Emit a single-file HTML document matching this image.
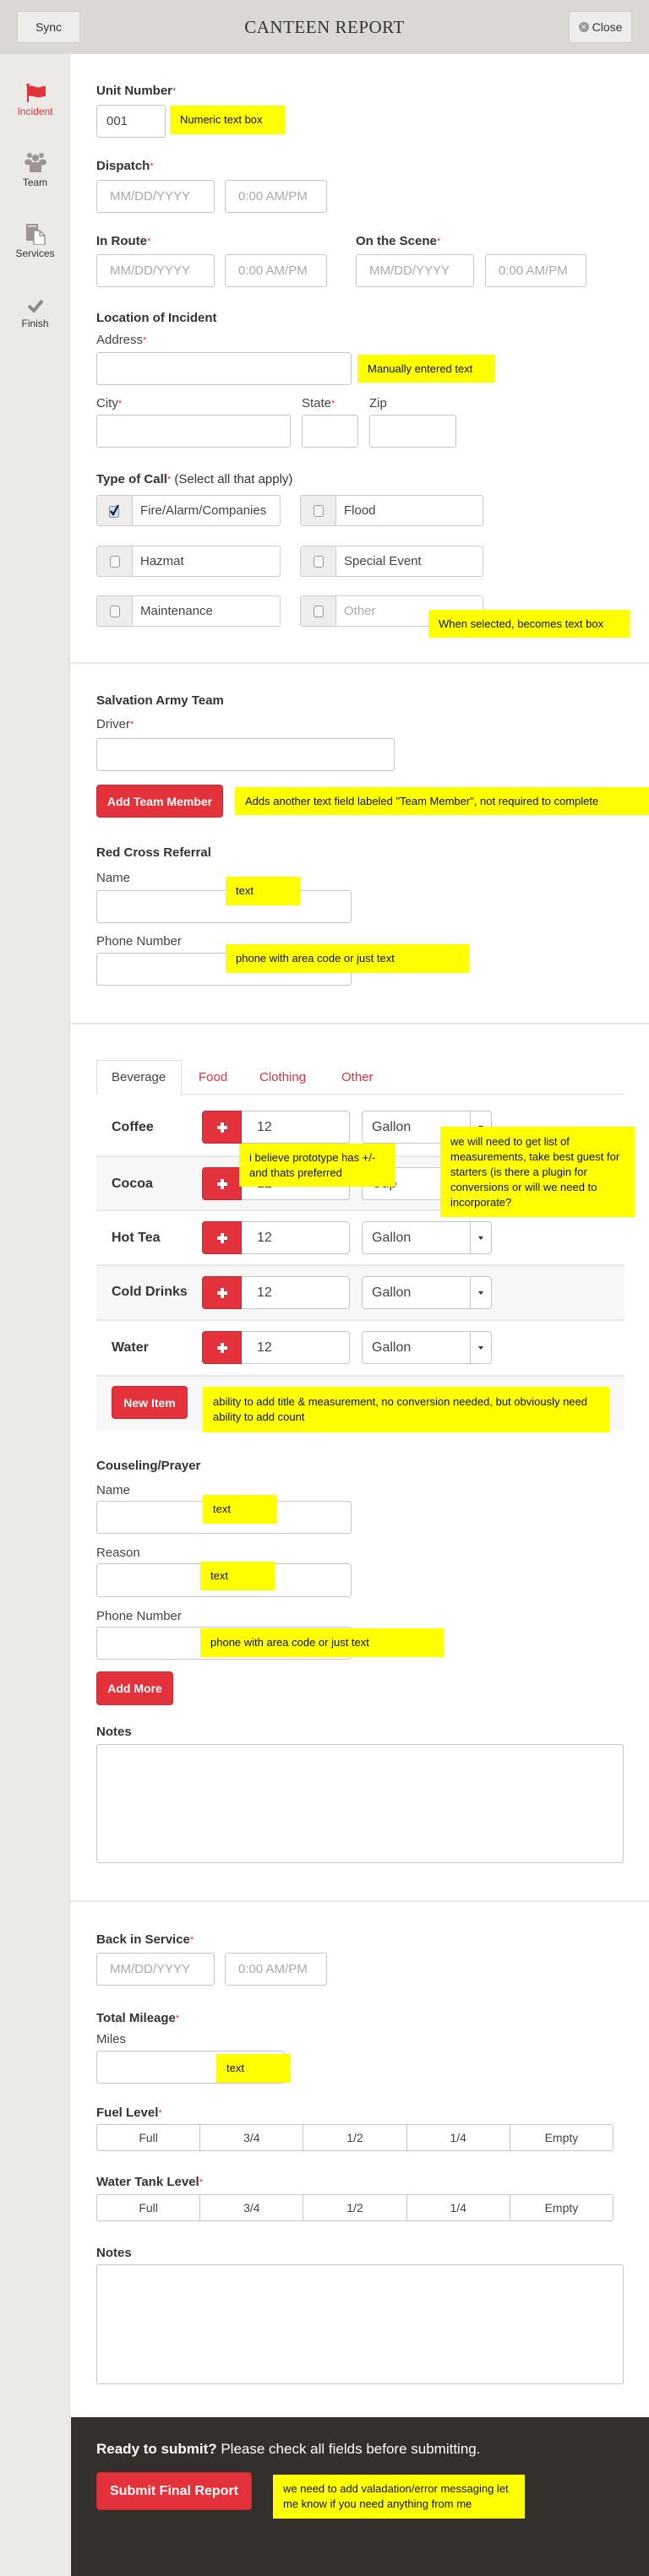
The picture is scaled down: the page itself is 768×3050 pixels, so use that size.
<!DOCTYPE html>
<html><head><meta charset="utf-8">
<style>
*{box-sizing:border-box;margin:0;padding:0}
body{width:768px;height:3050px;position:relative;background:#fff;font-family:"Liberation Sans",Arial,sans-serif;color:#333;overflow:hidden}
.a{position:absolute}
.hdr{left:0;top:0;width:768px;height:64px;background:#dbd8d3}
.btn{background:#eeedeb;border:1px solid #cfccc6;border-radius:3px;font-size:14px;color:#333;display:flex;align-items:center;justify-content:center}
.side{left:0;top:64px;width:83px;height:2986px;background:#ebeae7;border-right:1px solid #dad8d3}
.nav{width:83px;text-align:center;font-size:12px;color:#333;left:0}
.lbl{font-size:15px;font-weight:bold;color:#333;line-height:18px}
.sub{font-size:15px;color:#444;line-height:18px}
.st{color:#e3323b;font-size:11px;vertical-align:top;font-weight:normal}
.inp{border:1px solid #c8c5c0;border-radius:3px;background:#fff;font-size:15px;color:#aaa;display:flex;align-items:center;padding-left:15px}
.note{background:#ffff00;color:#111;font-size:13px;line-height:18px;padding:0 12px;display:flex;align-items:center}
.cb{border:1px solid #cfccc6;border-radius:3px;background:#fff;display:flex;align-items:center;font-size:15px;color:#444}
.cb .ad{width:42px;height:100%;background:#eeedeb;border-right:1px solid #cfccc6;display:flex;align-items:center;justify-content:center}
.cb .bx{width:12px;height:14px;border:1px solid #999;border-radius:3px;background:#f6f6f6}
.cb span{padding-left:9px}
.red{background:#e3323b;border:1px solid #c52a32;border-radius:4px;color:#fff;font-weight:bold;font-size:14px;display:flex;align-items:center;justify-content:center}
.div{left:83px;width:685px;height:2px;background:#e8e7e4}
.row{left:114px;width:625px}
.gray{background:#f7f7f7}
.rl{font-size:16px;font-weight:bold;color:#333}
.plus{width:47px;height:39px;background:#e3323b;border:1px solid #c52a32;border-radius:4px 0 0 4px;display:flex;align-items:center;justify-content:center}
.num{width:128px;height:39px;border:1px solid #c8c5c0;border-left:none;border-radius:0 4px 4px 0;font-size:16px;color:#444;padding-left:18px;display:flex;align-items:center;background:#fff}
.sel{width:154px;height:39px;border:1px solid #c8c5c0;border-radius:4px;font-size:16px;color:#444;padding-left:11px;display:flex;align-items:center;background:#fff}
.sel i{position:absolute;right:0;top:0;width:25px;height:37px;border-left:1px solid #c8c5c0}
.sel i:after{content:"";position:absolute;left:9px;top:17px;border:3px solid transparent;border-top:4px solid #333}
.grp{left:114px;width:612px;height:32px;border:1px solid #c8c5c0;border-radius:3px;display:flex;background:#fff}
.grp div{flex:1;border-right:1px solid #c8c5c0;display:flex;align-items:center;justify-content:center;font-size:14px;color:#444}
.grp div:last-child{border-right:none}
.ta{left:114px;width:624px;border:1px solid #c8c5c0;border-radius:3px;background:#fff}
</style></head><body>
<div class="a hdr"></div>
<div class="a btn" style="left:20px;top:13px;width:75px;height:38px">Sync</div>
<div class="a" style="left:0;width:768px;top:20px;text-align:center;font-family:'Liberation Serif',serif;font-size:21px;color:#333;letter-spacing:0.5px">CANTEEN REPORT</div>
<div class="a btn" style="left:673px;top:13px;width:75px;height:38px"><span style="display:inline-block;width:12px;height:12px;border-radius:50%;background:#999;color:#eee;font-size:9px;line-height:12px;text-align:center;margin-right:4px">✕</span>Close</div>

<div class="a side"></div>
<svg class="a" style="left:31px;top:99px" width="24" height="22" viewBox="0 0 24 22"><rect x="1" y="0" width="2" height="22" fill="#e3323b"/><circle cx="2" cy="1.5" r="1.8" fill="#e3323b"/><path d="M3 3 C8 1 12 6 17 4 C19 3.3 21 3 23 3 L23 15 C19 15 16 17 12 16 C8 15 6 14 3 15 Z" fill="#e3323b"/></svg>
<div class="a nav" style="top:125px;color:#e3323b">Incident</div>
<svg class="a" style="left:29px;top:180px" width="26" height="24" viewBox="0 0 26 24"><circle cx="6" cy="4" r="3" fill="#9b9690"/><circle cx="20" cy="4" r="3" fill="#9b9690"/><circle cx="13" cy="7" r="4" fill="#9b9690"/><ellipse cx="4.5" cy="12" rx="4.5" ry="3.5" fill="#9b9690"/><ellipse cx="21.5" cy="12" rx="4.5" ry="3.5" fill="#9b9690"/><path d="M6 24 L6 17 C6 13 9 12 13 12 C17 12 20 13 20 17 L20 24 Z" fill="#9b9690"/></svg>
<div class="a nav" style="top:209px">Team</div>
<svg class="a" style="left:30px;top:265px" width="24" height="25" viewBox="0 0 24 25"><rect x="1" y="0" width="14" height="20" fill="#9b9690"/><rect x="3" y="2" width="10" height="1.5" fill="#ebeae7"/><path d="M10 8 L17 8 L23 14 L23 25 L10 25 Z" fill="#fff" stroke="#9b9690" stroke-width="1.5"/><path d="M17 8 L17 14 L23 14" fill="none" stroke="#9b9690" stroke-width="1.5"/></svg>
<div class="a nav" style="top:293px">Services</div>
<svg class="a" style="left:33px;top:354px" width="18" height="16" viewBox="0 0 18 16"><path d="M1 8 L7 14 L17 2" fill="none" stroke="#8f8a84" stroke-width="4"/></svg>
<div class="a nav" style="top:376px">Finish</div>

<!-- Incident -->
<div class="a lbl" style="left:114px;top:99px">Unit Number<span class="st">*</span></div>
<div class="a inp" style="left:114px;top:124px;width:82px;height:39px;color:#444;padding-left:11px">001</div>
<div class="a note" style="left:201px;top:125px;width:136px;height:34px">Numeric text box</div>

<div class="a lbl" style="left:114px;top:188px">Dispatch<span class="st">*</span></div>
<div class="a inp" style="left:114px;top:213px;width:140px;height:39px">MM/DD/YYYY</div>
<div class="a inp" style="left:266px;top:213px;width:121px;height:39px">0:00 AM/PM</div>

<div class="a lbl" style="left:114px;top:277px">In Route<span class="st">*</span></div>
<div class="a inp" style="left:114px;top:301px;width:140px;height:39px">MM/DD/YYYY</div>
<div class="a inp" style="left:266px;top:301px;width:121px;height:39px">0:00 AM/PM</div>
<div class="a lbl" style="left:421px;top:277px">On the Scene<span class="st">*</span></div>
<div class="a inp" style="left:421px;top:301px;width:140px;height:39px">MM/DD/YYYY</div>
<div class="a inp" style="left:574px;top:301px;width:120px;height:39px">0:00 AM/PM</div>

<div class="a lbl" style="left:114px;top:368px">Location of Incident</div>
<div class="a sub" style="left:114px;top:394px">Address<span class="st">*</span></div>
<div class="a inp" style="left:114px;top:417px;width:302px;height:39px"></div>
<div class="a note" style="left:423px;top:420px;width:163px;height:33px">Manually entered text</div>
<div class="a sub" style="left:114px;top:469px">City<span class="st">*</span></div>
<div class="a sub" style="left:357px;top:469px">State<span class="st">*</span></div>
<div class="a sub" style="left:437px;top:469px">Zip</div>
<div class="a inp" style="left:114px;top:491px;width:230px;height:39px"></div>
<div class="a inp" style="left:357px;top:491px;width:67px;height:39px"></div>
<div class="a inp" style="left:437px;top:491px;width:103px;height:39px"></div>

<div class="a lbl" style="left:114px;top:559px">Type of Call<span class="st">*</span> <span style="font-weight:normal">(Select all that apply)</span></div>
<div class="a cb" style="left:114px;top:586px;width:218px;height:37px"><div class="ad"><svg width="14" height="16" viewBox="0 0 14 16"><rect x="0.5" y="2.5" width="11" height="13" rx="2" fill="#cfe0f5" stroke="#6a8cc0"/><path d="M2 8 L5 12 L11 1" fill="none" stroke="#111" stroke-width="2.2"/></svg></div><span>Fire/Alarm/Companies</span></div>
<div class="a cb" style="left:355px;top:586px;width:217px;height:37px"><div class="ad"><div class="bx"></div></div><span>Flood</span></div>
<div class="a cb" style="left:114px;top:646px;width:218px;height:37px"><div class="ad"><div class="bx"></div></div><span>Hazmat</span></div>
<div class="a cb" style="left:355px;top:646px;width:217px;height:37px"><div class="ad"><div class="bx"></div></div><span>Special Event</span></div>
<div class="a cb" style="left:114px;top:705px;width:218px;height:37px"><div class="ad"><div class="bx"></div></div><span>Maintenance</span></div>
<div class="a cb" style="left:355px;top:705px;width:217px;height:37px"><div class="ad"><div class="bx"></div></div><span style="color:#aaa">Other</span></div>
<div class="a note" style="left:507px;top:722px;width:238px;height:33px">When selected, becomes text box</div>

<div class="a div" style="top:784px"></div>

<!-- Team -->
<div class="a lbl" style="left:114px;top:821px">Salvation Army Team</div>
<div class="a sub" style="left:114px;top:849px">Driver<span class="st">*</span></div>
<div class="a inp" style="left:114px;top:874px;width:353px;height:39px"></div>
<div class="a red" style="left:114px;top:929px;width:150px;height:39px">Add Team Member</div>
<div class="a note" style="left:278px;top:932px;width:490px;height:33px">Adds another text field labeled "Team Member", not required to complete</div>

<div class="a lbl" style="left:114px;top:1001px">Red Cross Referral</div>
<div class="a sub" style="left:114px;top:1031px">Name</div>
<div class="a inp" style="left:114px;top:1054px;width:302px;height:39px"></div>
<div class="a note" style="left:267px;top:1038px;width:88px;height:34px">text</div>
<div class="a sub" style="left:114px;top:1106px">Phone Number</div>
<div class="a inp" style="left:114px;top:1128px;width:302px;height:39px"></div>
<div class="a note" style="left:267px;top:1118px;width:288px;height:34px">phone with area code or just text</div>

<div class="a div" style="top:1211px"></div>

<!-- Services -->
<div class="a" style="left:114px;top:1295px;width:625px;height:1px;background:#ddd"></div>
<div class="a" style="left:114px;top:1255px;width:101px;height:42px;border:1px solid #ddd;border-bottom:1px solid #fff;background:#fff"></div>
<div class="a sub" style="left:132px;top:1267px">Beverage</div>
<div class="a sub" style="left:235px;top:1267px;color:#e3323b">Food</div>
<div class="a sub" style="left:307px;top:1267px;color:#e3323b">Clothing</div>
<div class="a sub" style="left:404px;top:1267px;color:#e3323b">Other</div>

<div class="a row gray" style="top:1368px;height:66px;border-top:2px solid #e8e8e8;border-bottom:2px solid #e8e8e8"></div>
<div class="a row gray" style="top:1497px;height:67px;border-top:2px solid #e8e8e8;border-bottom:2px solid #e8e8e8"></div>
<div class="a row gray" style="top:1628px;height:65px;border-top:2px solid #e8e8e8"></div>

<div class="a rl" style="left:132px;top:1326px">Coffee</div>
<div class="a rl" style="left:132px;top:1393px">Cocoa</div>
<div class="a rl" style="left:132px;top:1457px">Hot Tea</div>
<div class="a rl" style="left:132px;top:1521px">Cold Drinks</div>
<div class="a rl" style="left:132px;top:1587px">Water</div>

<div class="a plus" style="left:239px;top:1315px"><svg width="14" height="14"><path d="M7 1V13M1 7H13" stroke="#fff" stroke-width="4"/></svg></div>
<div class="a num" style="left:286px;top:1315px">12</div>
<div class="a sel" style="left:428px;top:1315px">Gallon<i></i></div>
<div class="a plus" style="left:239px;top:1382px"><svg width="14" height="14"><path d="M7 1V13M1 7H13" stroke="#fff" stroke-width="4"/></svg></div>
<div class="a num" style="left:286px;top:1382px">12</div>
<div class="a sel" style="left:428px;top:1382px">Cup<i></i></div>
<div class="a plus" style="left:239px;top:1446px"><svg width="14" height="14"><path d="M7 1V13M1 7H13" stroke="#fff" stroke-width="4"/></svg></div>
<div class="a num" style="left:286px;top:1446px">12</div>
<div class="a sel" style="left:428px;top:1446px">Gallon<i></i></div>
<div class="a plus" style="left:239px;top:1511px"><svg width="14" height="14"><path d="M7 1V13M1 7H13" stroke="#fff" stroke-width="4"/></svg></div>
<div class="a num" style="left:286px;top:1511px">12</div>
<div class="a sel" style="left:428px;top:1511px">Gallon<i></i></div>
<div class="a plus" style="left:239px;top:1576px"><svg width="14" height="14"><path d="M7 1V13M1 7H13" stroke="#fff" stroke-width="4"/></svg></div>
<div class="a num" style="left:286px;top:1576px">12</div>
<div class="a sel" style="left:428px;top:1576px">Gallon<i></i></div>

<div class="a note" style="left:283px;top:1354px;width:185px;height:51px">i believe prototype has +/- and thats preferred</div>
<div class="a note" style="left:521px;top:1334px;width:230px;height:107px">we will need to get list of measurements, take best guest for starters (is there a plugin for conversions or will we need to incorporate?</div>
<div class="a red" style="left:132px;top:1641px;width:90px;height:39px">New Item</div>
<div class="a note" style="left:240px;top:1642px;width:481px;height:54px">ability to add title &amp; measurement, no conversion needed, but obviously need ability to add count</div>

<div class="a lbl" style="left:114px;top:1727px">Couseling/Prayer</div>
<div class="a sub" style="left:114px;top:1756px">Name</div>
<div class="a inp" style="left:114px;top:1777px;width:302px;height:39px"></div>
<div class="a note" style="left:240px;top:1770px;width:88px;height:34px">text</div>
<div class="a sub" style="left:114px;top:1830px">Reason</div>
<div class="a inp" style="left:114px;top:1851px;width:302px;height:40px"></div>
<div class="a note" style="left:237px;top:1849px;width:88px;height:34px">text</div>
<div class="a sub" style="left:114px;top:1905px">Phone Number</div>
<div class="a inp" style="left:114px;top:1926px;width:302px;height:39px"></div>
<div class="a note" style="left:237px;top:1928px;width:288px;height:34px">phone with area code or just text</div>
<div class="a red" style="left:114px;top:1979px;width:91px;height:40px">Add More</div>
<div class="a lbl" style="left:114px;top:2042px">Notes</div>
<div class="a ta" style="top:2065px;height:141px"></div>

<div class="a div" style="top:2250px"></div>

<!-- Finish -->
<div class="a lbl" style="left:114px;top:2288px">Back in Service<span class="st">*</span></div>
<div class="a inp" style="left:114px;top:2312px;width:140px;height:39px">MM/DD/YYYY</div>
<div class="a inp" style="left:266px;top:2312px;width:121px;height:39px">0:00 AM/PM</div>
<div class="a lbl" style="left:114px;top:2381px">Total Mileage<span class="st">*</span></div>
<div class="a sub" style="left:114px;top:2406px">Miles</div>
<div class="a inp" style="left:114px;top:2428px;width:223px;height:39px"></div>
<div class="a note" style="left:256px;top:2432px;width:88px;height:34px">text</div>
<div class="a lbl" style="left:114px;top:2493px">Fuel Level<span class="st">*</span></div>
<div class="a grp" style="top:2515px"><div>Full</div><div>3/4</div><div>1/2</div><div>1/4</div><div>Empty</div></div>
<div class="a lbl" style="left:114px;top:2575px">Water Tank Level<span class="st">*</span></div>
<div class="a grp" style="top:2598px"><div>Full</div><div>3/4</div><div>1/2</div><div>1/4</div><div>Empty</div></div>
<div class="a lbl" style="left:114px;top:2659px">Notes</div>
<div class="a ta" style="top:2681px;height:142px"></div>

<div class="a" style="left:84px;top:2862px;width:684px;height:188px;background:#332f2a"></div>
<div class="a" style="left:114px;top:2890px;font-size:17px;color:#fff"><b>Ready to submit?</b> Please check all fields before submitting.</div>
<div class="a red" style="left:114px;top:2927px;width:184px;height:45px;font-size:16px">Submit Final Report</div>
<div class="a note" style="left:323px;top:2930px;width:298px;height:52px">we need to add valadation/error messaging let me know if you need anything from me</div>
</body></html>
